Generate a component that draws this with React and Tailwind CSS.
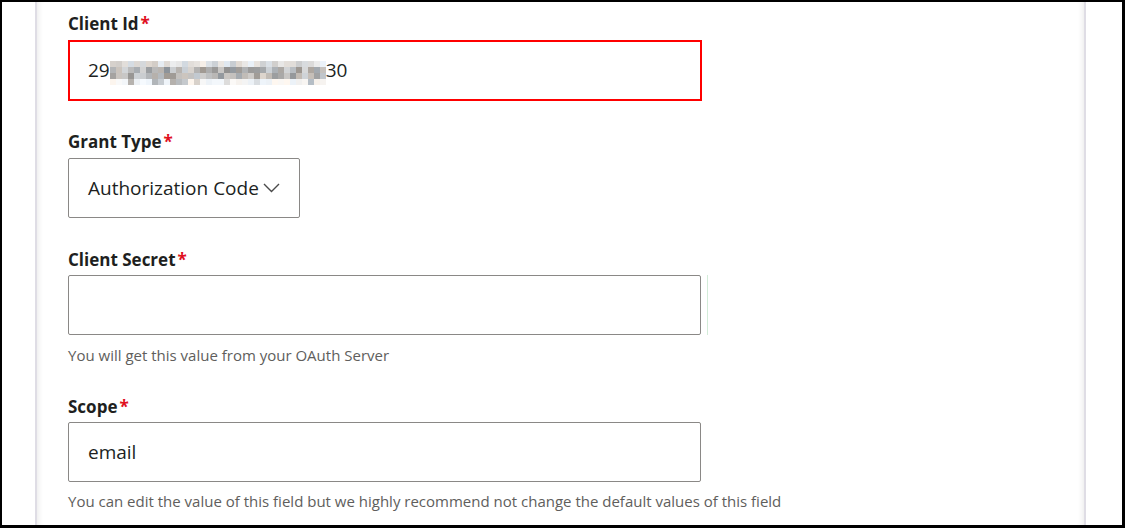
import React from "react";

const font = { fontFamily: '"Open Sans", "Noto Sans", sans-serif' };

function rand(seed) {
  let s = seed;
  return () => {
    s = (s * 9301 + 49297) % 233280;
    return s / 233280;
  };
}

const r = rand(42);
const mosaic = [];
for (let row = 0; row < 4; row++) {
  const line = [];
  for (let col = 0; col < 36; col++) {
    let dark;
    if (row === 0) dark = r() * 0.3 + 0.05;
    else if (row === 3) dark = r() < 0.25 ? r() * 0.4 + 0.2 : r() * 0.08;
    else dark = r() * 0.6 + 0.25;
    const v = Math.round(250 - dark * 130);
    const tint = Math.round((r() - 0.5) * 16);
    line.push(`rgb(${v + tint},${v},${v - tint})`);
  }
  mosaic.push(line);
}

function Label({ children }) {
  return (
    <div className="h-6 flex items-center text-[17px] font-bold text-[#201f1e] leading-6">
      <span>{children}</span>
      <span className="text-[#e0101e] ml-[2px]">*</span>
    </div>
  );
}

function Chevron() {
  return (
    <svg width="17" height="10" viewBox="0 0 17 10" fill="none">
      <path d="M1 1 L8.5 8.5 L16 1" stroke="#4a4a4a" strokeWidth="1.4" />
    </svg>
  );
}

export default function App() {
  return (
    <div
      className="w-[1125px] h-[528px] bg-white border-l-2 border-t-2 border-r-[3px] border-b-[3px] border-black flex overflow-hidden"
      style={font}
    >
      <div className="w-[33px] shrink-0" />
      <div className="w-[1051px] shrink-0 border-l-2 border-r-2 border-[#dfdde5] shadow-[inset_7px_0_7px_-7px_rgba(0,0,0,0.12),inset_-7px_0_7px_-7px_rgba(0,0,0,0.12)] pl-[31px] pt-[10px]">
        <Label>Client Id</Label>
        <div className="mt-1 w-[634px] h-[61px] border-2 border-[#ff0000] flex items-center pl-[18px] text-[19px] text-[#201f1e]">
          <span>29</span>
          <div className="flex flex-col mt-[5px]">
            {mosaic.map((line, i) => (
              <div key={i} className="flex">
                {line.map((c, j) => (
                  <div key={j} className="w-[6px] h-[6px]" style={{ backgroundColor: c }} />
                ))}
              </div>
            ))}
          </div>
          <span>30</span>
        </div>

        <div className="mt-[29px]">
          <Label>Grant Type</Label>
        </div>
        <div className="mt-1 w-[232px] h-[60px] border border-[#8a8886] rounded-[2px] flex items-center pl-[19px] gap-[4px] text-[19px] text-[#201f1e]">
          <span>Authorization Code</span>
          <Chevron />
        </div>

        <div className="mt-[30px]">
          <Label>Client Secret</Label>
        </div>
        <div className="mt-[3px] flex items-stretch">
          <div className="w-[633px] h-[60px] border border-[#8a8886] rounded-[2px]" />
          <div className="ml-[6px] w-px bg-[#d3ecd9]" />
        </div>
        <div className="mt-[10px] h-5 flex items-center text-[15px] text-[#605e5c]">
          You will get this value from your OAuth Server
        </div>

        <div className="mt-[30px]">
          <Label>Scope</Label>
        </div>
        <div className="mt-[3px] w-[633px] h-[60px] border border-[#8a8886] rounded-[2px] flex items-center pl-[19px] text-[19px] text-[#201f1e]">
          email
        </div>
        <div className="mt-[9px] h-5 flex items-center text-[15px] text-[#605e5c]">
          You can edit the value of this field but we highly recommend not change the default values of this field
        </div>
      </div>
      <div className="flex-1" />
    </div>
  );
}
